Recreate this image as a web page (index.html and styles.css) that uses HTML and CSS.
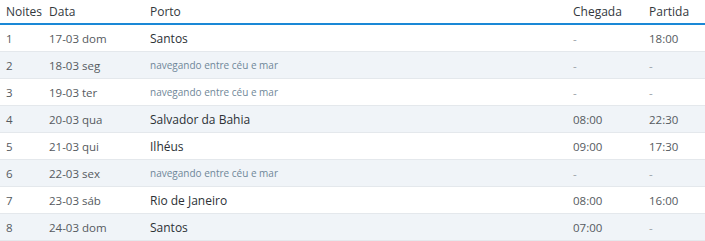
FILE: index.html
```html
<!DOCTYPE html>
<html lang="pt">
<head>
<meta charset="utf-8">
<link rel="stylesheet" href="styles.css">
</head>
<body>
<table class="itin">
  <colgroup>
    <col class="c-n"><col class="c-d"><col class="c-p"><col class="c-c"><col class="c-t">
  </colgroup>
  <thead>
    <tr><th>Noites</th><th>Data</th><th>Porto</th><th>Chegada</th><th>Partida</th></tr>
  </thead>
  <tbody>
    <tr><td>1</td><td>17-03 dom</td><td class="port">Santos</td><td class="dash">-</td><td>18:00</td></tr>
    <tr><td>2</td><td>18-03 seg</td><td class="sea">navegando entre céu e mar</td><td class="dash">-</td><td class="dash">-</td></tr>
    <tr><td>3</td><td>19-03 ter</td><td class="sea">navegando entre céu e mar</td><td class="dash">-</td><td class="dash">-</td></tr>
    <tr><td>4</td><td>20-03 qua</td><td class="port">Salvador da Bahia</td><td>08:00</td><td>22:30</td></tr>
    <tr><td>5</td><td>21-03 qui</td><td class="port">Ilhéus</td><td>09:00</td><td>17:30</td></tr>
    <tr><td>6</td><td>22-03 sex</td><td class="sea">navegando entre céu e mar</td><td class="dash">-</td><td class="dash">-</td></tr>
    <tr><td>7</td><td>23-03 sáb</td><td class="port">Rio de Janeiro</td><td>08:00</td><td>16:00</td></tr>
    <tr><td>8</td><td>24-03 dom</td><td class="port">Santos</td><td>07:00</td><td class="dash">-</td></tr>
  </tbody>
</table>
</body>
</html>
```

FILE: styles.css
```css
html, body {
  margin: 0;
  padding: 0;
  background: #ffffff;
}
body {
  font-family: "Open Sans", "Noto Sans", sans-serif;
  color: #555a60;
}
.itin {
  width: 705px;
  border-collapse: collapse;
  table-layout: fixed;
}
.c-n { width: 43px; }
.c-d { width: 101px; }
.c-p { width: 423px; }
.c-c { width: 76px; }
.c-t { width: 62px; }
.itin th {
  text-align: left;
  font-weight: 500;
  font-size: 12px;
  color: #33383d;
  height: 23px;
  padding: 0 0 0 6px;
  border-bottom: 2px solid #1a88d6;
  vertical-align: middle;
}
.itin td {
  font-size: 11.5px;
  height: 26px;
  padding: 0 0 0 6px;
  border-bottom: 1px solid #e4e8ec;
  vertical-align: middle;
  white-space: nowrap;
}
.itin tbody tr:nth-child(even) td {
  background: #f0f4f8;
}
.itin td.port {
  color: #2c3136;
  font-weight: 500;
  font-size: 12px;
}
.itin td.sea {
  color: #6f8798;
  font-size: 10px;
}
.itin td.dash {
  color: #9aa0a6;
}
```
